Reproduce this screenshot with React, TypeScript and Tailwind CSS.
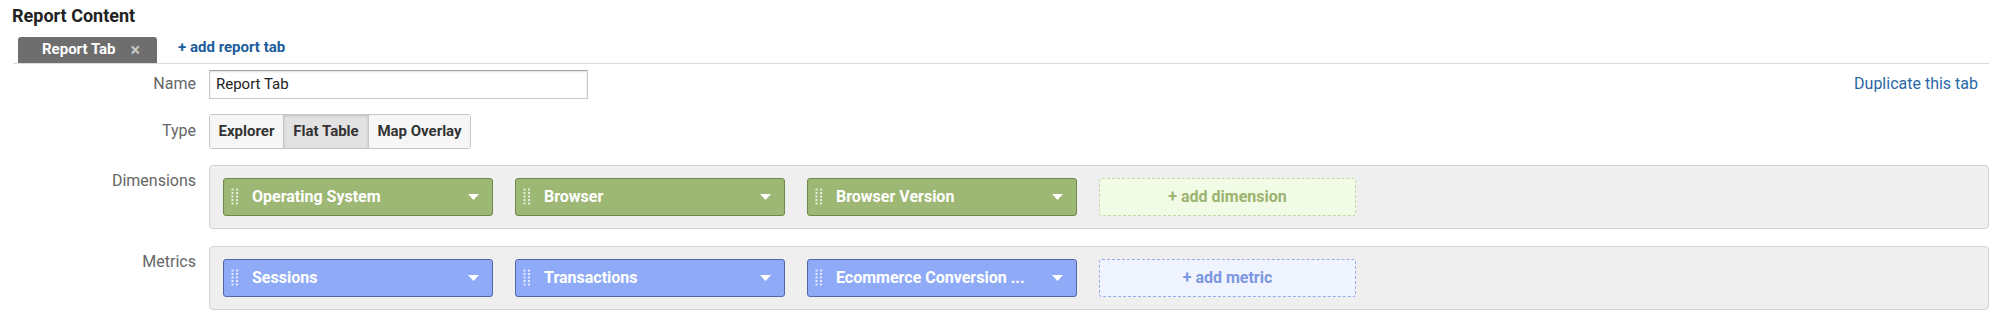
import React from "react"

type Pill = { label: string }

const dims: Pill[] = [
  { label: "Operating System" },
  { label: "Browser" },
  { label: "Browser Version" },
]

const metrics: Pill[] = [
  { label: "Sessions" },
  { label: "Transactions" },
  { label: "Ecommerce Conversion ..." },
]

function Grip() {
  const rows = [1.5, 5, 8.5, 12, 15.5]
  return (
    <svg width="8" height="17" viewBox="0 0 8 17" className="shrink-0">
      {rows.map((y) => (
        <g key={y} fill="rgba(255,255,255,0.75)">
          <rect x="0.5" y={y - 1} width="2" height="2" />
          <rect x="5" y={y - 1} width="2" height="2" />
        </g>
      ))}
    </svg>
  )
}

function Caret() {
  return (
    <svg width="11" height="6" viewBox="0 0 11 6" className="shrink-0">
      <path d="M0 0 L11 0 L5.5 6 Z" fill="#fff" />
    </svg>
  )
}

function FieldPill({ label, kind }: { label: string; kind: "dim" | "metric" }) {
  const tone =
    kind === "dim"
      ? "bg-[#9db774] border-[#6f8a4c]"
      : "bg-[#8fabf8] border-[#4f67ad]"
  return (
    <div
      className={`flex h-[38px] w-[270px] shrink-0 items-center rounded-[3px] border pl-[7px] pr-[13px] ${tone}`}
    >
      <Grip />
      <span className="ml-[13px] flex-1 truncate text-[16px] font-bold text-white">
        {label}
      </span>
      <Caret />
    </div>
  )
}

function FieldPanel({ items, kind }: { items: Pill[]; kind: "dim" | "metric" }) {
  const add =
    kind === "dim"
      ? "border-[#c6d4a6] bg-[#f2fbe6] text-[#9bb46f]"
      : "border-[#9aabe9] bg-[#eff4fe] text-[#7c97e2]"
  return (
    <div className="flex flex-1 gap-[22px] rounded-[4px] border border-[#d3d3d3] bg-[#efefef] px-[13px] py-[12px]">
      {items.map((p) => (
        <FieldPill key={p.label} label={p.label} kind={kind} />
      ))}
      <div
        className={`flex h-[38px] w-[257px] items-center justify-center rounded-[3px] border border-dashed text-[16px] font-bold ${add}`}
      >
        {kind === "dim" ? "+ add dimension" : "+ add metric"}
      </div>
    </div>
  )
}

function Label({ children, top = false }: { children: React.ReactNode; top?: boolean }) {
  return (
    <div
      className={`w-[196px] shrink-0 text-right text-[16px] leading-[20px] text-[#666] ${top ? "pt-[6px]" : ""}`}
    >
      {children}
    </div>
  )
}

export default function App() {
  return (
    <div className="min-h-[321px] w-full bg-white font-['Roboto',sans-serif] text-[#222]">
      <h2 className="pl-[12px] pt-[6px] text-[18px] font-bold leading-[20px]">
        Report Content
      </h2>

      <div className="ml-[13px] mr-[10px] mt-[10px] flex items-end border-b border-[#dcdcdc] pl-[5px]">
        <div className="flex h-[26px] items-center rounded-t-[3px] bg-[#6e6e6e] pl-[24px] pr-[17px]">
          <span className="text-[15px] font-bold text-white">Report Tab</span>
          <span className="ml-[15px] text-[18px] font-bold leading-none text-[#c4c4c4]">×</span>
        </div>
        <a className="mb-[4px] ml-[21px] text-[15px] font-bold text-[#1d5d9c]">
          + add report tab
        </a>
      </div>

      <div className="mt-[6px] flex flex-col gap-[15px] pr-[10px]">
        <div className="flex items-center gap-[13px]">
          <Label>Name</Label>
          <div className="flex h-[29px] w-[379px] items-center border border-[#c8c8c8] border-t-[#a0a0a0] bg-white pl-[6px] text-[15px] text-[#222] shadow-[inset_0_1px_2px_rgba(0,0,0,0.12)]">
            Report Tab
          </div>
          <div className="flex-1" />
          <a className="mr-[11px] text-[16px] text-[#2a68a6]">Duplicate this tab</a>
        </div>

        <div className="flex items-center gap-[13px]">
          <Label>Type</Label>
          <div className="flex h-[35px] overflow-hidden rounded-[3px] border border-[#c6c6c6] text-[15px] font-bold text-[#333]">
            <div className="flex w-[73px] items-center justify-center bg-[#f6f6f6]">Explorer</div>
            <div className="flex w-[86px] items-center justify-center border-x border-[#c6c6c6] bg-[#e2e2e2] shadow-[inset_0_1px_3px_rgba(0,0,0,0.15)]">
              Flat Table
            </div>
            <div className="flex w-[101px] items-center justify-center bg-[#f6f6f6]">Map Overlay</div>
          </div>
        </div>

        <div className="mt-[1px] flex gap-[13px]">
          <Label top>Dimensions</Label>
          <FieldPanel items={dims} kind="dim" />
        </div>

        <div className="mt-[2px] flex gap-[13px]">
          <Label top>Metrics</Label>
          <FieldPanel items={metrics} kind="metric" />
        </div>
      </div>
    </div>
  )
}
